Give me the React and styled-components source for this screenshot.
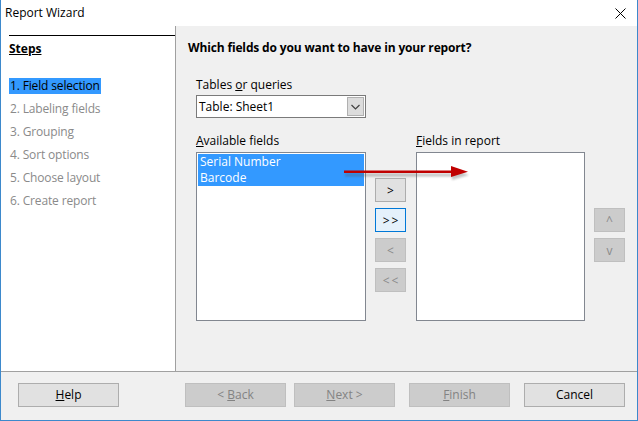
import React from "react";
import styled, { createGlobalStyle } from "styled-components";

const Global = createGlobalStyle`
  html, body { margin: 0; padding: 0; background: #ffffff; }
  body { font-family: "Segoe UI", "Open Sans", "Noto Sans", sans-serif; font-size: 12px; color: #000; }
  * { box-sizing: border-box; }
`;

const Window = styled.div`
  position: relative;
  width: 638px;
  height: 421px;
  display: flex;
  flex-direction: column;
  border: 1px solid #3d89cc;
  border-top: none;
  background: #f0f0f0;
  overflow: hidden;
`;

const TitleBar = styled.div`
  height: 26px;
  flex: none;
  background: #ffffff;
  display: flex;
  align-items: center;
  justify-content: space-between;
  padding: 0 11px 0 4px;
`;

const Title = styled.span`
  font-size: 12px;
  line-height: 16px;
  color: #000;
`;

const Body = styled.div`
  flex: 1;
  display: flex;
  min-height: 0;
`;

const StepsPanel = styled.div`
  width: 175px;
  flex: none;
  background: #ffffff;
  border-right: 1px solid #a0a0a0;
  padding: 9px 0 0 8px;
  display: flex;
  flex-direction: column;
`;

const StepsRule = styled.div`
  height: 1px;
  background: #000;
`;

const StepsHeading = styled.div`
  font-weight: 700;
  text-decoration: underline;
  line-height: 16px;
  margin-top: 5px;
  margin-bottom: 17px;
`;

const StepRow = styled.div`
  height: 23px;
  display: flex;
  align-items: center;
`;

const StepLabel = styled.span`
  line-height: 16px;
  padding: 0 1px 0 1px;
  letter-spacing: -0.15px;
  color: ${(p) => (p.$active ? "#000" : "#8a8a8a")};
  background: ${(p) => (p.$active ? "#3399ff" : "transparent")};
`;

const Content = styled.div`
  flex: 1;
  padding: 14px 0 0 12px;
  display: flex;
  flex-direction: column;
`;

const Heading = styled.div`
  font-weight: 700;
  line-height: 16px;
  letter-spacing: -0.15px;
`;

const Section = styled.div`
  padding-left: 8px;
  display: flex;
  flex-direction: column;
`;

const Label = styled.div`
  line-height: 16px;
  margin-top: ${(p) => p.$mt || 0}px;
`;

const Combo = styled.div`
  margin-top: 2px;
  width: 170px;
  height: 23px;
  border: 1px solid #7a7a7a;
  background: #fff;
  display: flex;
  align-items: center;
  justify-content: space-between;
  padding: 0 1px 0 2px;
`;

const ComboText = styled.span`
  line-height: 16px;
`;

const ComboButton = styled.div`
  width: 17px;
  height: 19px;
  background: #dcdcdc;
  border: 1px solid #b0b0b0;
  display: flex;
  align-items: center;
  justify-content: center;
`;

const FieldGrid = styled.div`
  margin-top: 15px;
  display: grid;
  grid-template-columns: 170px 32px 169px 31px;
  grid-template-rows: 16px 169px;
  column-gap: 9px;
  row-gap: 3px;
`;

const ListBox = styled.div`
  grid-row: 2;
  grid-column: ${(p) => p.$col};
  border: 1px solid #828790;
  background: #fff;
  padding: 1px;
`;

const ListItem = styled.div`
  height: 16px;
  line-height: 16px;
  padding-left: 2px;
  color: ${(p) => (p.$selected ? "#fff" : "#000")};
  background: ${(p) => (p.$selected ? "#3399ff" : "transparent")};
`;

const ButtonColumn = styled.div`
  grid-row: 2;
  grid-column: ${(p) => p.$col};
  padding-top: ${(p) => p.$pt}px;
  display: flex;
  flex-direction: column;
  gap: 6px;
`;

const SmallButton = styled.div`
  width: 31px;
  height: 24px;
  display: flex;
  align-items: center;
  justify-content: center;
  font-size: 12px;
  letter-spacing: 2px;
  padding-left: 2px;
  border: 1px solid
    ${(p) => (p.$focus ? "#0078d7" : p.$disabled ? "#bfbfbf" : "#adadad")};
  background: ${(p) => (p.$focus ? "#e5f1fb" : p.$disabled ? "#cccccc" : "#e1e1e1")};
  color: ${(p) => (p.$disabled ? "#8a8a8a" : "#000")};
`;

const Footer = styled.div`
  height: 49px;
  flex: none;
  border-top: 1px solid #a0a0a0;
  display: flex;
  align-items: flex-start;
  padding: 11px 12px 0 17px;
`;

const Button = styled.div`
  width: 101px;
  height: 24px;
  display: flex;
  align-items: center;
  justify-content: center;
  margin-left: ${(p) => p.$ml || 0}px;
  border: 1px solid ${(p) => (p.$disabled ? "#bfbfbf" : "#adadad")};
  background: ${(p) => (p.$disabled ? "#cccccc" : "#e1e1e1")};
  color: ${(p) => (p.$disabled ? "#838383" : "#000")};
  line-height: 16px;
`;

const Spacer = styled.div`
  flex: 1;
`;

const U = styled.span`
  text-decoration: underline;
`;

const ArrowOverlay = styled.svg`
  position: absolute;
  left: 340px;
  top: 162px;
  pointer-events: none;
`;

const steps = [
  "1. Field selection",
  "2. Labeling fields",
  "3. Grouping",
  "4. Sort options",
  "5. Choose layout",
  "6. Create report",
];

export default function App() {
  return (
    <>
      <Global />
      <Window>
        <TitleBar>
          <Title>Report Wizard</Title>
          <svg width="11" height="11" viewBox="0 0 11 11">
            <path d="M0.5 0.5 L10.5 10.5 M10.5 0.5 L0.5 10.5" stroke="#000" strokeWidth="1" />
          </svg>
        </TitleBar>
        <Body>
          <StepsPanel>
            <StepsRule />
            <StepsHeading>Steps</StepsHeading>
            {steps.map((s, i) => (
              <StepRow key={s}>
                <StepLabel $active={i === 0}>{s}</StepLabel>
              </StepRow>
            ))}
          </StepsPanel>
          <Content>
            <Heading>Which fields do you want to have in your report?</Heading>
            <Section>
              <Label $mt={21}>
                Tables <U>o</U>r queries
              </Label>
              <Combo>
                <ComboText>Table: Sheet1</ComboText>
                <ComboButton>
                  <svg width="9" height="6" viewBox="0 0 9 6">
                    <path d="M0.5 1 L4.5 5 L8.5 1" stroke="#404040" strokeWidth="1.2" fill="none" />
                  </svg>
                </ComboButton>
              </Combo>
              <FieldGrid>
                <Label>
                  <U>A</U>vailable fields
                </Label>
                <Label style={{ gridColumn: 3 }}>
                  <U>F</U>ields in report
                </Label>
                <ListBox $col={1}>
                  <ListItem $selected>Serial Number</ListItem>
                  <ListItem $selected>Barcode</ListItem>
                </ListBox>
                <ButtonColumn $col={2} $pt={26}>
                  <SmallButton>&gt;</SmallButton>
                  <SmallButton $focus>&gt;&gt;</SmallButton>
                  <SmallButton $disabled>&lt;</SmallButton>
                  <SmallButton $disabled>&lt;&lt;</SmallButton>
                </ButtonColumn>
                <ListBox $col={3} />
                <ButtonColumn $col={4} $pt={56}>
                  <SmallButton $disabled>^</SmallButton>
                  <SmallButton $disabled>v</SmallButton>
                </ButtonColumn>
              </FieldGrid>
            </Section>
          </Content>
        </Body>
        <Footer>
          <Button>
            <span>
              <U>H</U>elp
            </span>
          </Button>
          <Spacer />
          <Button $disabled>
            <span>
              &lt; <U>B</U>ack
            </span>
          </Button>
          <Button $disabled $ml={8}>
            <span>
              <U>N</U>ext &gt;
            </span>
          </Button>
          <Button $disabled $ml={14}>
            <span>
              <U>F</U>inish
            </span>
          </Button>
          <Button $ml={14}>Cancel</Button>
        </Footer>
        <ArrowOverlay width="140" height="24" viewBox="0 0 140 24">
          <defs>
            <filter id="sh" x="-10%" y="-50%" width="120%" height="200%">
              <feGaussianBlur stdDeviation="1.2" />
            </filter>
          </defs>
          <g opacity="0.35" filter="url(#sh)" transform="translate(1,3)">
            <path d="M3 10 L112 10" stroke="#555" strokeWidth="3" />
            <path d="M110 4 L127 10 L110 15 Z" fill="#555" />
          </g>
          <path d="M3 9.8 L112 9.8" stroke="#c00000" strokeWidth="2.6" />
          <path d="M110 4 L127 9.8 L110 15 Z" fill="#c00000" />
        </ArrowOverlay>
      </Window>
    </>
  );
}
